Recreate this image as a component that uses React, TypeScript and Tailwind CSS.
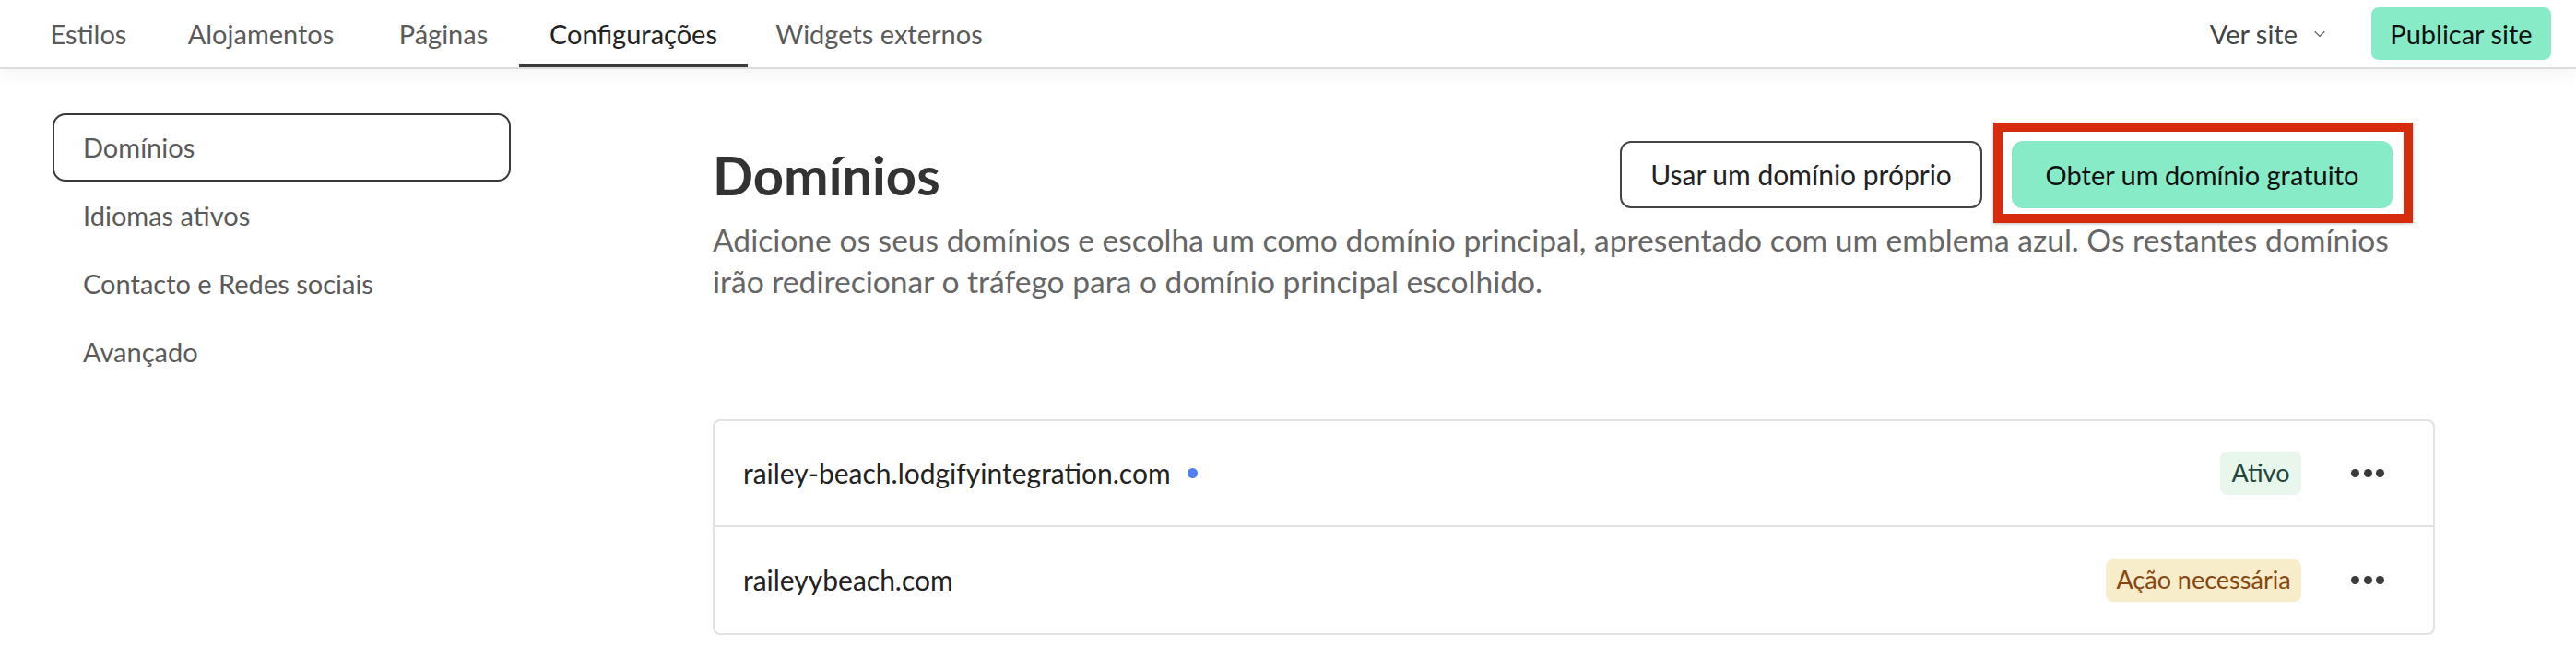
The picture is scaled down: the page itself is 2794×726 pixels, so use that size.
import { ChevronDown } from 'lucide-react'

const tabs = [
  { label: 'Estilos', w: 'w-[142px]' },
  { label: 'Alojamentos', w: 'w-[232px]' },
  { label: 'Páginas', w: 'w-[164px]' },
  { label: 'Configurações', w: 'w-[248px]', active: true },
  { label: 'Widgets externos', w: 'w-[285px]' },
]

const menu = ['Domínios', 'Idiomas ativos', 'Contacto e Redes sociais', 'Avançado']

type Domain = { name: string; primary?: boolean; status: 'ok' | 'action' }

const domains: Domain[] = [
  { name: 'railey-beach.lodgifyintegration.com', primary: true, status: 'ok' },
  { name: 'raileyybeach.com', status: 'action' },
]

function Dots() {
  return (
    <button className="ml-[54px] flex w-[36px] items-center justify-between">
      <span className="h-[9px] w-[9px] rounded-full bg-[#3a3a3a]" />
      <span className="h-[9px] w-[9px] rounded-full bg-[#3a3a3a]" />
      <span className="h-[9px] w-[9px] rounded-full bg-[#3a3a3a]" />
    </button>
  )
}

function DomainRow({ d, last }: { d: Domain; last: boolean }) {
  return (
    <div className={`flex h-[115px] items-center pl-[31px] pr-[53px] ${last ? '' : 'border-b-2 border-[#e2e2e2]'}`}>
      <span className="text-[30px] text-[#222]">{d.name}</span>
      {d.primary && <span className="ml-[18px] h-[11px] w-[11px] rounded-full bg-[#4f7ff0]" />}
      <div className="flex-1" />
      {d.status === 'ok' ? (
        <span className="flex h-[47px] w-[88px] items-center justify-center rounded-[8px] bg-[#e9f6ec] text-[27px] text-[#24463b]">Ativo</span>
      ) : (
        <span className="flex h-[46px] w-[212px] items-center justify-center rounded-[8px] bg-[#f8edca] text-[27px] text-[#88460f]">Ação necessária</span>
      )}
      <Dots />
    </div>
  )
}

export default function App() {
  return (
    <div className="h-[726px] w-[2794px] overflow-hidden bg-white font-['Lato',sans-serif]">
      <header className="relative z-10 flex h-[75px] items-stretch border-b-2 border-[#dcdcdc] bg-white pl-[25px] pr-[27px] shadow-[0_6px_18px_rgba(0,0,0,0.045)]">
        <nav className="flex items-stretch">
          {tabs.map((t) => (
            <div
              key={t.label}
              className={`flex items-center justify-center text-[29px] ${t.w} ${t.active ? 'border-b-4 border-[#3a3a3a] pt-[4px] text-[#222]' : 'text-[#5a5a5a]'}`}
            >
              {t.label}
            </div>
          ))}
        </nav>
        <div className="flex-1" />
        <div className="flex items-center">
          <button className="flex items-center gap-[14px] text-[29px] text-[#444]">
            Ver site
            <ChevronDown className="h-[20px] w-[20px] text-[#666]" strokeWidth={1.4} />
          </button>
          <button className="ml-[46px] flex h-[57px] w-[195px] items-center justify-center rounded-[8px] bg-[#86ebc6] text-[29px] text-[#111]">
            Publicar site
          </button>
        </div>
      </header>

      <div className="flex pt-[48px]">
        <aside className="ml-[57px] w-[497px] shrink-0">
          {menu.map((m, i) => (
            <div
              key={m}
              className={`flex h-[74px] items-center pl-[31px] text-[29px] text-[#5a5a5a] ${i === 0 ? 'rounded-[14px] border-2 border-[#3a3a3a]' : 'border-2 border-transparent'}`}
            >
              {m}
            </div>
          ))}
        </aside>

        <main className="ml-[219px] w-[1868px] shrink-0">
          <div className="mt-[30px] flex w-[1822px] items-center justify-between">
            <h1 className="text-[58px] font-bold leading-none text-[#333]">Domínios</h1>
            <div className="flex items-center gap-[32px]">
              <button className="flex h-[73px] w-[393px] items-center justify-center rounded-[12px] border-2 border-[#444] text-[30px] text-[#222]">
                Usar um domínio próprio
              </button>
              <div className="relative">
                <button className="flex h-[73px] w-[413px] items-center justify-center rounded-[12px] bg-[#86ebc6] text-[29px] text-[#111]">
                  Obter um domínio gratuito
                </button>
                <div className="pointer-events-none absolute -bottom-[16px] -left-[20px] -right-[22px] -top-[20px] border-[10px] border-[#d62b0c] shadow-[0_1px_3px_rgba(0,0,0,0.25)]" />
              </div>
            </div>
          </div>
          <p className="mt-[12px] whitespace-nowrap text-[33.6px] leading-[45px] text-[#666]">
            Adicione os seus domínios e escolha um como domínio principal, apresentado com um emblema azul. Os restantes domínios
            <br />
            irão redirecionar o tráfego para o domínio principal escolhido.
          </p>

          <div className="mt-[127px] overflow-hidden rounded-[8px] border-2 border-[#e2e2e2]">
            {domains.map((d, i) => (
              <DomainRow key={d.name} d={d} last={i === domains.length - 1} />
            ))}
          </div>
        </main>
      </div>
    </div>
  )
}
